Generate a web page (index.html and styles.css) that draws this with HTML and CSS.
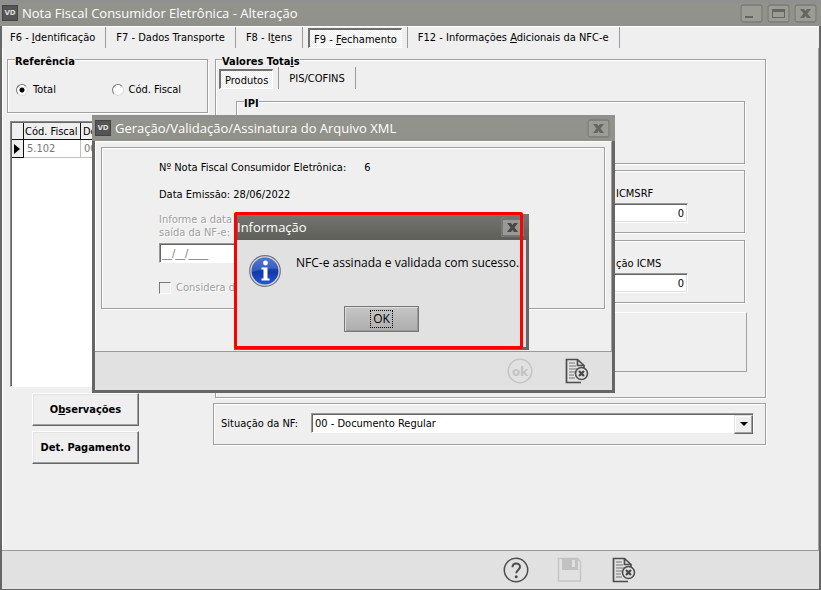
FILE: index.html
```
<!DOCTYPE html>
<html lang="pt-BR">
<head>
<meta charset="utf-8">
<title>Nota Fiscal Consumidor Eletrônica - Alteração</title>
<link rel="stylesheet" href="styles.css">
</head>
<body>
<svg class="defs" aria-hidden="true">
  <symbol id="close" viewBox="0 0 23 19">
    <rect x="1" y="1" width="21" height="17" rx="2" fill="none" stroke="currentColor" stroke-opacity=".6" stroke-width="1.3"/>
    <path d="M6 5h4l1.500 2 1.500-2h4l-3.500 4.500L17 14h-4l-1.500-2-1.500 2H6l3.500-4.500z" fill="currentColor"/>
  </symbol>
  <symbol id="doc-close" viewBox="0 0 24 26">
    <path d="M19 10.500V7.500L12.500 1.500H1.500v23H16M12.500 1.500v6H19" fill="none" stroke="#4d4d4d" stroke-width="1.700"/>
    <path d="M4 5h6M4 8h7M4 11h9M4 14h6M4 17h5M4 20h6" stroke="#777" stroke-width="1.200"/>
    <circle cx="16.500" cy="15.500" r="6" fill="#e1e1e1" stroke="#4d4d4d" stroke-width="1.600"/>
    <path d="M14 13l5 5M19 13l-5 5" stroke="#444" stroke-width="2.200"/>
  </symbol>
</svg>

<div class="window">
  <header class="titlebar">
    <span class="logo">VD</span>
    <h1>Nota Fiscal Consumidor Eletrônica - Alteração</h1>
    <div class="caption-buttons">
      <button type="button" aria-label="Minimizar"><svg viewBox="0 0 23 19"><rect x="1" y="1" width="21" height="17" rx="2" fill="none" stroke="currentColor" stroke-opacity=".6" stroke-width="1.3"/><path d="M5 12h8v2H5z" fill="currentColor"/></svg></button>
      <button type="button" aria-label="Maximizar"><svg viewBox="0 0 23 19"><rect x="1" y="1" width="21" height="17" rx="2" fill="none" stroke="currentColor" stroke-opacity=".6" stroke-width="1.3"/><path fill-rule="evenodd" d="M5 5h13v9H5zM6 8v5h11V8z" fill="currentColor"/></svg></button>
      <button type="button" aria-label="Fechar"><svg><use href="#close"/></svg></button>
    </div>
  </header>

  <nav class="tabs">
    <button type="button">F6 - <u>I</u>dentificação</button>
    <button type="button">F7 - Dados Transporte</button>
    <button type="button">F8 - I<u>t</u>ens</button>
    <button type="button" class="active"><span>F9 - <u>F</u>echamento</span></button>
    <button type="button">F12 - Informações <u>A</u>dicionais da NFC-e</button>
  </nav>

  <main class="content">
    <section class="left">
      <fieldset class="group reference">
        <legend>Referência</legend>
        <label><input type="radio" name="ref" checked>Total</label>
        <label><input type="radio" name="ref">Cód. Fiscal</label>
      </fieldset>
      <div class="grid">
        <table>
          <thead><tr><th class="mark"></th><th class="code">Cód. Fiscal</th><th>De</th></tr></thead>
          <tbody><tr><td class="mark"><i></i></td><td>5.102</td><td>00</td></tr></tbody>
        </table>
      </div>
      <div class="actions">
        <button type="button">O<u>b</u>servações</button>
        <button type="button">Det. Pa<u>g</u>amento</button>
      </div>
    </section>

    <section class="right">
      <fieldset class="group totals">
        <legend>Valores Tota<u>i</u>s</legend>
        <div class="tabs subtabs">
          <button type="button" class="active"><span>Produtos</span></button>
          <button type="button">PIS/COFINS</button>
        </div>
        <fieldset class="group ipi"><legend>IPI</legend></fieldset>
        <div class="group values"><label for="icmsrf">ICMSRF</label><input id="icmsrf" value="0"></div>
        <div class="group values"><label for="icms">ção ICMS</label><input id="icms" value="0"></div>
        <div class="panel"></div>
      </fieldset>
      <div class="group status">
        <label for="situacao">Situação da NF:</label>
        <span class="combo"><select id="situacao"><option>00 - Documento Regular</option></select></span>
      </div>
    </section>
  </main>

  <footer class="toolbar">
    <button type="button" aria-label="Ajuda"><svg viewBox="0 0 26 26"><circle cx="13" cy="13" r="11.700" fill="none" stroke="#4d4d4d" stroke-width="1.500"/><path d="M9.500 10.200C9.500 5.200 17 5.300 17 9.800c0 3-3.800 3.200-3.800 6.500" fill="none" stroke="#4d4d4d" stroke-width="2"/><circle cx="13.200" cy="19.700" r="1.500" fill="#4d4d4d"/></svg></button>
    <button type="button" aria-label="Salvar" disabled><svg viewBox="0 0 26 26"><path d="M1.500 1.500h19l3 3v19.500h-22z" fill="none" stroke="#c6c6c6" stroke-width="1.500"/><path fill-rule="evenodd" d="M5 1h16v12H5zM15 3v7h3V3z" fill="#c2c2c2"/></svg></button>
    <button type="button" aria-label="Sair"><svg><use href="#doc-close"/></svg></button>
  </footer>
</div>

<section class="dialog" role="dialog" aria-labelledby="xml-title">
  <header class="titlebar">
    <span class="logo">VD</span>
    <h2 id="xml-title">Geração/Validação/Assinatura do Arquivo XML</h2>
    <div class="caption-buttons"><button type="button" aria-label="Fechar"><svg><use href="#close"/></svg></button></div>
  </header>
  <div class="dialog-body">
    <div class="group xml">
      <p><span>Nº Nota Fiscal Consumidor Eletrônica:</span><span>6</span></p>
      <p>Data Emissão: 28/06/2022</p>
      <label class="muted date" for="saida">Informe a data<br>saída da NF-e:</label>
      <input id="saida" value="__/__/____" disabled>
      <label class="muted check"><input type="checkbox" disabled>Considera d</label>
    </div>
  </div>
  <footer class="toolbar">
    <button type="button" aria-label="Confirmar" disabled><svg viewBox="0 0 26 26"><circle cx="13" cy="13" r="11.800" fill="none" stroke="#c4c4c4" stroke-width="1.500"/><text x="13" y="17.500" text-anchor="middle" class="ok-text">ok</text></svg></button>
    <button type="button" aria-label="Sair"><svg><use href="#doc-close"/></svg></button>
  </footer>

  <section class="message" role="alertdialog" aria-labelledby="msg-title">
    <header class="titlebar">
      <h3 id="msg-title">Informação</h3>
      <div class="caption-buttons"><button type="button" aria-label="Fechar"><svg><use href="#close"/></svg></button></div>
    </header>
    <div class="message-body">
      <svg class="info" viewBox="0 0 32 32" aria-hidden="true">
        <defs><linearGradient id="blue" x1="0" y1="0" x2="0" y2="1"><stop offset="0" stop-color="#3f6bd0"/><stop offset=".55" stop-color="#1438a8"/><stop offset="1" stop-color="#2456dc"/></linearGradient></defs>
        <circle cx="16" cy="16" r="15.300" fill="#d8dade" stroke="#6f747c" stroke-width="1.200"/>
        <circle cx="16" cy="16" r="13.500" fill="url(#blue)"/>
        <path d="M3 17a13 13 0 0 1 26-3C22 13 10 14 3 17z" fill="#6e90e0" opacity=".35"/>
        <circle cx="16.500" cy="8" r="2.400" fill="#fff"/>
        <path d="M12.500 12.500h6v11h2v2h-8v-2h2v-9h-2z" fill="#fff"/>
      </svg>
      <p>NFC-e assinada e validada com sucesso.</p>
    </div>
    <button type="button" class="ok"><span>OK</span></button>
    <div class="highlight"></div>
  </section>
</section>
</body>
</html>
```

FILE: styles.css
```
* { box-sizing: border-box; }
body, h1, h2, h3, p, fieldset { margin: 0; padding: 0; }
fieldset { min-width: 0; }
body {
  position: relative;
  min-height: 100vh;
  overflow: hidden;
  background: #efefef;
  color: #000;
  font: 11px/13px "DejaVu Sans Condensed", Tahoma, "DejaVu Sans", sans-serif;
}
button, input, select { font: inherit; color: inherit; }
button { padding: 0; border: 0; background: none; }
.defs { position: absolute; width: 0; height: 0; }

.window {
  display: flex;
  flex-direction: column;
  height: 100vh;
  border: solid #666;
  border-width: 0 2px 1px;
}
.titlebar {
  display: flex;
  flex: none;
  align-items: center;
  height: 26px;
  background: linear-gradient(#8e8f90, #92938b 20%, #90918a);
  color: #fff;
}
.window > .titlebar { margin: 0 -2px; padding: 0 4px 0 2px; }
.titlebar h1, .titlebar h2, .titlebar h3 {
  flex: 1;
  font: 13px/18px "Open Sans", "Noto Sans", sans-serif;
  white-space: nowrap;
}
.logo {
  width: 16px;
  height: 16px;
  margin-right: 4px;
  border: 1px solid #444;
  background: #555;
  color: #ddd;
  font: bold 7px/14px "DejaVu Sans", sans-serif;
  text-align: center;
}
.caption-buttons { display: flex; gap: 4px; color: #65665f; }
.caption-buttons button, .caption-buttons svg { display: block; width: 23px; height: 19px; }
.caption-buttons button { border-radius: 3px; background: #9b9c95; }

.tabs {
  display: flex;
  flex: none;
  height: 22px;
  border-top: 1px solid #fff;
}
.tabs button {
  padding: 0 10px;
  border-right: 1px solid #999;
  white-space: nowrap;
}
.tabs button:first-child { padding-left: 8px; }
.tabs button.active { padding: 1px 5px 0; }
.tabs .active span {
  display: block;
  height: 20px;
  padding: 3px 4px;
  border: 1px solid #fff;
  border-top: 2px solid #707070;
  border-left: 2px solid #707070;
  background: repeating-conic-gradient(#fff 0 25%, #eee 0 50%) 0 0 / 2px 2px;
}

.content {
  display: grid;
  flex: 1;
  grid-template-columns: 201px 1fr;
  column-gap: 6px;
  align-content: start;
  padding: 3px 52px 0 4px;
  border: solid #fff;
  border-width: 0 1px;
  border-right-color: #a0a0a0;
}
.group {
  border: 1px solid #a0a0a0;
  box-shadow: 1px 1px 0 #fff, inset 1px 1px 0 #fff;
}
legend {
  margin-left: 7px;
  padding: 4px 0 0;
  background: #efefef;
  font-weight: bold;
}
.reference { display: flex; height: 62px; padding: 15px 0 0 8px; }
.reference legend { margin-left: -1px; }
.reference label { display: flex; align-items: center; width: 96px; height: 13px; gap: 5px; white-space: nowrap; }
input[type="radio"] {
  appearance: none;
  flex: none;
  width: 12px;
  height: 12px;
  margin: 0;
  border: 1px solid;
  border-color: #777 #ddd #ddd #777;
  border-radius: 50%;
  background: #fff;
}
input[type="radio"]:checked { background: radial-gradient(circle, #000 0 2px, #fff 3px); }

.grid {
  height: 266px;
  margin: 8px 0 0 3px;
  border: 1px solid;
  border-color: #888 #fff #fff #888;
  box-shadow: inset 1px 1px 0 #666;
  background: #fff;
  padding: 1px;
}
table { width: 100%; border-collapse: separate; border-spacing: 0; table-layout: fixed; }
th, td { height: 17px; padding: 0 2px; overflow: hidden; text-align: left; white-space: nowrap; }
th { border: solid #111; border-width: 0 1px 1px 0; background: #efefef; font-weight: normal; }
td { border: solid #c0c0c0; border-width: 0 1px 1px 0; color: #777; padding-left: 3px; height: 18px; }
.code { width: 57px; padding: 0 1px; }
.mark { width: 12px; padding: 0 2px; background: #efefef; border-color: #111; }
.mark i { display: block; width: 6px; border: solid transparent; border-width: 5px 0 5px 6px; border-left-color: #000; }
.actions { display: grid; gap: 5px; width: 107px; margin: 6px 0 0 25px; }
.actions button {
  height: 33px;
  border: 1px solid;
  border-color: #fff #666 #666 #fff;
  box-shadow: inset -1px -1px 0 #a0a0a0, inset 1px 1px 0 #e2e2e2;
  background: #efefef;
  font-weight: bold;
  white-space: nowrap;
}

.right { display: grid; gap: 5px; align-content: start; }
.totals { height: 347px; margin-left: 1px; padding: 0 20px; }
.totals > legend { margin-left: -14px; }
.subtabs { margin: -1px 0 0 -17px; border: 0; }
.subtabs button.active { padding: 1px 5px 0 0; }
.ipi { height: 71px; margin-top: 4px; }
.values { height: 63px; margin-top: 6px; padding: 16px 56px 0; text-align: right; }
.values label { display: block; width: 72px; margin-left: auto; text-align: left; }
.values input {
  display: block;
  width: 120px;
  height: 20px;
  margin: 3px 0 0 auto;
  padding: 0 3px;
  border: 1px solid;
  border-color: #999 #fff #fff #999;
  box-shadow: inset 0 1px 0 #666, inset -1px -1px 0 #e0e0e0;
  background: #fff;
  text-align: right;
}
.values + .values { margin-top: 7px; }
.panel {
  height: 60px;
  margin: 9px -2px 0 0;
  border: 1px solid;
  border-color: #fff #a0a0a0 #a0a0a0 #fff;
}
.status { display: flex; align-items: center; gap: 13px; height: 42px; padding: 0 11px 2px 7px; margin-left: -1px; }
.combo {
  position: relative;
  flex: 1;
  height: 20px;
  border: 1px solid;
  border-color: #999 #fff #fff #999;
  box-shadow: inset 1px 1px 0 #666;
}
.combo select {
  appearance: none;
  display: block;
  width: calc(100% - 1px);
  height: 17px;
  margin: 1px 0 0 1px;
  padding: 0 2px;
  border: 0;
  border-radius: 0;
  background: #fff;
}
.combo::before, .combo::after { content: ""; position: absolute; pointer-events: none; }
.combo::before {
  top: 1px;
  right: 0;
  width: 17px;
  height: 17px;
  border: 1px solid;
  border-color: #e0e0e0 #666 #666 #e0e0e0;
  box-shadow: inset -1px -1px 0 #a0a0a0, inset 1px 1px 0 #fff;
  background: #efefef;
}
.combo::after { top: 8px; right: 5px; border: solid transparent; border-width: 4px 4px 0; border-top-color: #000; }

.toolbar {
  display: flex;
  flex: none;
  justify-content: flex-end;
  align-items: center;
  gap: 28px;
  height: 39px;
  padding-right: 182px;
  border-top: 1px solid #999;
  background: #e1e1e1;
}
.toolbar button, .toolbar svg { display: block; width: 26px; height: 26px; }
.ok-text { fill: #c2c2c2; font: bold 13px "Open Sans", sans-serif; }

.dialog {
  position: absolute;
  top: 115px;
  left: 92px;
  display: flex;
  flex-direction: column;
  width: 523px;
  border: solid #666;
  border-width: 0 3px 3px;
  background: #efefef;
}
.dialog > .titlebar { margin: 0 -3px; padding: 0 5px 0 3px; }
.dialog-body {
  padding: 5px 6px 42px 5px;
  border: solid #fff;
  border-width: 1px 1px 0;
  border-right-color: #a0a0a0;
}
.xml { display: flex; flex-direction: column; align-items: flex-start; height: 162px; padding: 13px 57px 0; }
.xml p { display: flex; gap: 18px; margin-bottom: 14px; white-space: nowrap; }
.muted { color: #a0a0a0; text-shadow: 1px 1px 0 #fff; }
.date { margin-top: -2px; }
.xml input:not([type]) {
  width: 120px;
  height: 20px;
  margin: 4px 0 18px;
  padding: 0 2px;
  border: 1px solid;
  border-color: #999 #fff #fff #999;
  box-shadow: inset 1px 1px 0 #666;
  background: #fff;
  color: #777;
}
.check { display: flex; align-items: center; gap: 5px; }
.check input {
  appearance: none;
  width: 12px;
  height: 12px;
  margin: 0;
  border: 1px solid;
  border-color: #777 #fff #fff #777;
}
.dialog > .toolbar { gap: 31px; padding-right: 22px; }

.message {
  position: absolute;
  top: 99px;
  left: 139px;
  width: 295px;
  height: 136px;
  border: solid #666;
  border-width: 0 3px 3px;
  background: #e1e1e1;
}
.message .titlebar {
  margin: 0 -3px;
  padding: 0 5px 0 3px;
  background: linear-gradient(#757571, #5f5f59);
}
.message .caption-buttons { color: #484844; }
.message .caption-buttons button { background: #999a96; }
.message-body { display: flex; gap: 15px; padding: 15px 12px 0; }
.message-body p { font: 12px/16px "Open Sans", "Noto Sans", sans-serif; white-space: nowrap; }
.info { flex: none; width: 32px; height: 32px; }
.ok {
  display: block;
  width: 75px;
  height: 26px;
  margin: 19px auto 0 107px;
  border: 1px solid #777;
  box-shadow: inset 1px 1px 0 #ddd, inset -1px -1px 0 #999;
  background: linear-gradient(#c6c6c6, #adadad);
  font: 12px/16px "Open Sans", "Noto Sans", sans-serif;
}
.ok span { display: inline-block; padding: 0 2px; border: 1px dotted #000; }
.highlight {
  position: absolute;
  top: -2px;
  left: -3px;
  width: 289px;
  height: 137px;
  border: 3px solid #f00;
  border-radius: 2px;
  pointer-events: none;
}
```
